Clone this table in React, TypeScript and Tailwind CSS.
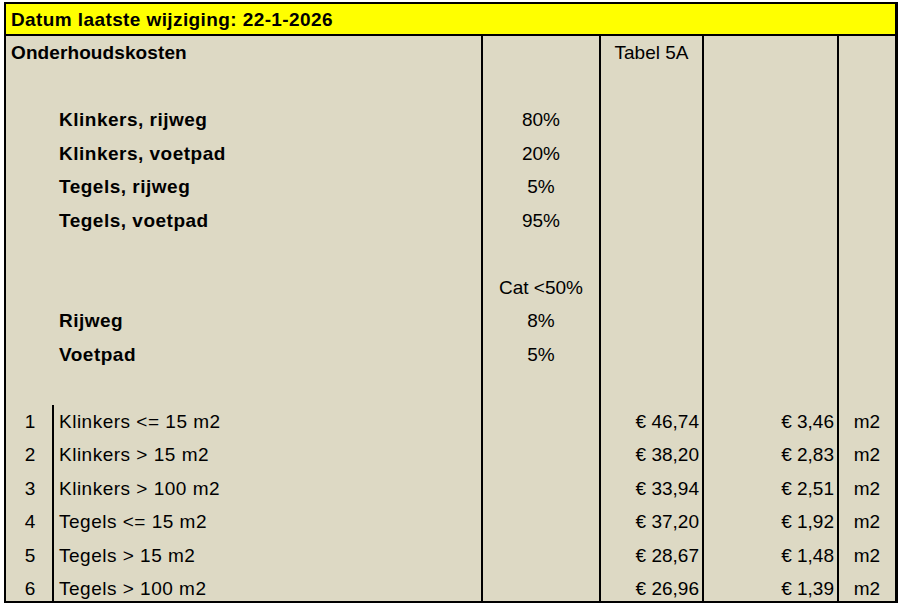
import React from "react";

type Row = {
  a?: string;
  b?: string;
  bold?: boolean;
  c?: string;
  d?: string;
  e?: string;
  f?: string;
  line?: boolean;
};

const rows: Row[] = [
  {},
  { b: "Klinkers, rijweg", bold: true, c: "80%" },
  { b: "Klinkers, voetpad", bold: true, c: "20%" },
  { b: "Tegels, rijweg", bold: true, c: "5%" },
  { b: "Tegels, voetpad", bold: true, c: "95%" },
  {},
  { c: "Cat <50%" },
  { b: "Rijweg", bold: true, c: "8%" },
  { b: "Voetpad", bold: true, c: "5%" },
  {},
  { a: "1", b: "Klinkers <= 15 m2", d: "€ 46,74", e: "€ 3,46", f: "m2", line: true },
  { a: "2", b: "Klinkers > 15 m2", d: "€ 38,20", e: "€ 2,83", f: "m2", line: true },
  { a: "3", b: "Klinkers > 100 m2", d: "€ 33,94", e: "€ 2,51", f: "m2", line: true },
  { a: "4", b: "Tegels <= 15 m2", d: "€ 37,20", e: "€ 1,92", f: "m2", line: true },
  { a: "5", b: "Tegels > 15 m2", d: "€ 28,67", e: "€ 1,48", f: "m2", line: true },
  { a: "6", b: "Tegels > 100 m2", d: "€ 26,96", e: "€ 1,39", f: "m2", line: true },
];

const grid = "grid grid-cols-[46px_429px_118px_103px_135px_58px] h-[33.5px]";

export default function App() {
  return (
    <div className="w-[900px] h-[606px] bg-white pt-[2px] pl-[4px] font-['Liberation_Sans',Arial,sans-serif] text-[19px] text-black leading-none">
      <div className="w-[894px] border-2 border-r-[3px] border-black bg-[#ddd9c4]">
        <div className="h-[32px] bg-[#ffff00] border-b-2 border-black flex items-center pl-[5px] font-bold tracking-[0.4px]">
          Datum laatste wijziging: 22-1-2026
        </div>
        <div className="h-[565px] overflow-hidden">
          <div className={grid}>
            <div className="col-span-2 flex items-center pl-[5px] font-bold tracking-[0.1px]">Onderhoudskosten</div>
            <div className="border-l-2 border-black" />
            <div className="border-l-2 border-black flex items-center justify-center">Tabel 5A</div>
            <div className="border-l-2 border-black" />
            <div className="border-l-2 border-black" />
          </div>
          {rows.map((r, i) => (
            <div key={i} className={grid}>
              <div className="flex items-center justify-center pl-[2px]">{r.a}</div>
              <div
                className={
                  "flex items-center pl-[5px] border-l-2 tracking-[0.5px] " +
                  (r.line ? "border-black" : "border-transparent") +
                  (r.bold ? " font-bold" : "")
                }
              >
                {r.b}
              </div>
              <div className="border-l-2 border-black flex items-center justify-center">{r.c}</div>
              <div className="border-l-2 border-black flex items-center justify-end pr-[3px]">{r.d}</div>
              <div className="border-l-2 border-black flex items-center justify-end pr-[3px]">{r.e}</div>
              <div className="border-l-2 border-black flex items-center justify-center">{r.f}</div>
            </div>
          ))}
        </div>
      </div>
    </div>
  );
}
